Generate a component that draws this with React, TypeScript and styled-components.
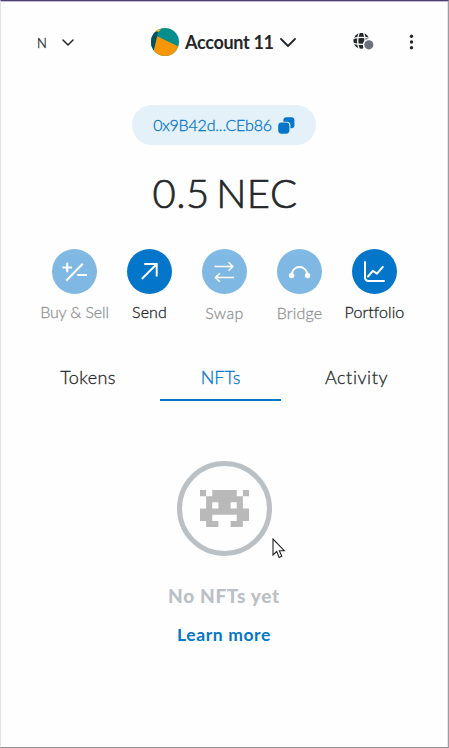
import React from "react";
import styled, { createGlobalStyle } from "styled-components";

const blue = "#0376c9";
const ink = "#24272a";

const GlobalStyle = createGlobalStyle`
  *, *::before, *::after { box-sizing: border-box; }
  body { margin: 0; background: #fefefe; font-family: Lato, "Liberation Sans", sans-serif; font-variant-ligatures: none; color: ${ink}; }
  button { font: inherit; color: inherit; background: none; border: 0; padding: 0; margin: 0; font-variant-ligatures: none; }
  svg { display: block; flex: none; }
`;

const Popup = styled.main`
  position: relative;
  width: 449px;
  height: 748px;
  overflow: hidden;
  background: #fefefe;
  border-top: 1px solid #4b4070;
  border-left: 1px solid #e2e0ee;
  border-right: 1px solid #9d9ca2;
  border-bottom: 1px solid #929292;
  box-shadow: inset 0 1px 0 #c5bedb, inset -1px 0 0 #e6e4ed;
`;

const Label = styled.span<{ $size: number; $weight?: number; $spacing?: number }>`
  font-size: ${(p) => p.$size}px;
  font-weight: ${(p) => p.$weight ?? 400};
  letter-spacing: ${(p) => p.$spacing ?? 0}px;
  line-height: 24px;
  white-space: nowrap;
  -webkit-text-stroke: ${(p) => (p.$weight === 300 ? 0.3 : 0)}px currentColor;
`;

const Header = styled.header`
  display: grid;
  grid-template-columns: 114px 183px 1fr;
  align-items: center;
  height: 28px;
  margin-top: 27px;
  padding: 0 34px 0 36px;
`;

const NetworkPicker = styled.button`
  display: flex;
  align-items: center;
  gap: 15px;
  padding-top: 1px;
`;

const AccountPicker = styled.button`
  display: flex;
  align-items: center;
  gap: 6px;
`;

const HeaderTools = styled.div`
  display: flex;
  align-items: center;
  justify-content: space-between;
  padding-left: 19px;
`;

const AddressPill = styled.button`
  display: flex;
  align-items: center;
  justify-content: center;
  gap: 6px;
  width: 184px;
  height: 40px;
  margin: 49px 0 0 131px;
  border-radius: 20px;
  background: #e5f1f9;
  color: ${blue};
`;

const Balance = styled.h1`
  margin: 24px 0 0;
  height: 48px;
  padding-left: 1px;
  font-size: 40px;
  line-height: 48px;
  font-weight: 300;
  letter-spacing: 0.5px;
  word-spacing: -5px;
  text-align: center;
  -webkit-text-stroke: 0.7px ${ink};
`;

const Actions = styled.nav`
  display: grid;
  grid-template-columns: repeat(5, 75px);
  margin: 32px 0 0 36px;
`;

const Action = styled.button<{ $muted: boolean; $drop: boolean }>`
  display: flex;
  flex-direction: column;
  align-items: center;
  gap: ${(p) => (p.$drop ? 7 : 6)}px;
  opacity: ${(p) => (p.$muted ? 0.5 : 1)};
`;

const ActionDisc = styled.span`
  display: grid;
  place-items: center;
  width: 45px;
  height: 45px;
  border-radius: 50%;
  background: ${blue};
`;

const Tabs = styled.div`
  display: grid;
  grid-template-columns: 144px 121px 151px;
  height: 46px;
  margin: 30px 0 0 15px;
`;

const Tab = styled.button<{ $active?: boolean }>`
  display: flex;
  justify-content: center;
  padding-top: 10px;
  border-bottom: 2px solid ${(p) => (p.$active ? blue : "transparent")};
  color: ${(p) => (p.$active ? blue : ink)};
`;

const EmptyState = styled.section`
  display: flex;
  flex-direction: column;
  align-items: center;
  padding-right: 1px;
  margin-top: 60px;
`;

const InvaderRing = styled.div`
  display: grid;
  place-items: center;
  width: 95px;
  height: 95px;
  border: 5px solid #bbc0c5;
  border-radius: 50%;
`;

const EmptyTitle = styled(Label)`
  margin-top: 28px;
  color: #bbc0c5;
`;

const LearnMore = styled(Label).attrs({ as: "a" })`
  margin-top: 15px;
  color: ${blue};
`;

const Pointer = styled.svg`
  position: absolute;
  left: 271px;
  top: 537px;
`;

const Chevron = ({ width, height, stroke }: { width: number; height: number; stroke: number }) => (
  <svg width={width} height={height} viewBox={`0 0 ${width} ${height}`} fill="none" stroke={ink} strokeWidth={stroke} strokeLinecap="round" strokeLinejoin="round">
    <path d={`M1 1 L${width / 2} ${height - 1} L${width - 1} 1`} />
  </svg>
);

const Avatar = () => (
  <svg width="28" height="28" viewBox="0 0 28 28">
    <defs>
      <clipPath id="avatar-disc"><circle cx="14" cy="14" r="14" /></clipPath>
    </defs>
    <g clipPath="url(#avatar-disc)">
      <path fill="#018e8c" d="M0 0h28v28H0z" />
      <path fill="#fbb300" d="M4 0L10 1.5L6.5 5L3 4z" />
      <path fill="#03505f" d="M0 4L7.2 3.4L6 9L3 22.5L0 24z" />
      <path fill="#f59602" d="M6.2 8.2L29 19.2V28H0L3 22z" />
    </g>
  </svg>
);

const Globe = () => (
  <svg width="22" height="18" viewBox="0 0 22 18">
    <circle cx="8.4" cy="7.8" r="8" fill={ink} />
    <g fill="none" stroke="#fefefe" strokeWidth="1.3">
      <path d="M6.2 -.5Q3.2 7.8 6.2 16.5M10.6 -.5Q13.6 7.8 10.6 16.5" />
      <path d="M0 5.4Q8.4 3.4 17 5.4M0 10.4Q8.4 12.4 17 10.4" />
    </g>
    <circle cx="15.8" cy="11.8" r="6" fill="#fefefe" />
    <circle cx="15.8" cy="11.8" r="4.6" fill="#6a737d" />
  </svg>
);

const Dots = () => (
  <svg width="5" height="16" viewBox="0 0 5 16" fill={ink}>
    <circle cx="2.5" cy="2.3" r="1.7" />
    <circle cx="2.5" cy="8" r="1.7" />
    <circle cx="2.5" cy="13.7" r="1.7" />
  </svg>
);

const CopyIcon = () => (
  <svg width="17" height="17" viewBox="0 0 17 17" fill={blue}>
    <rect x="5.4" y="0.3" width="11" height="11" rx="3" />
    <rect x="0" y="4.7" width="12.4" height="12.4" rx="3.5" fill="#e5f1f9" />
    <rect x="0.2" y="5.5" width="11.2" height="11.2" rx="3.4" />
  </svg>
);

const glyphs: Record<string, React.ReactNode> = {
  "Buy & Sell": <path d="M15 14v9.5M10.2 18.7h9.6M14 32L30.5 15M25 26.4h9.8" transform="translate(.2 -.3)" />,
  Send: <path d="M14.8 30L29.5 15.3M17.2 15h12.5v12.4" />,
  Swap: <path strokeWidth="1.6" d="M12.5 17.5h18M26.5 13.2l4.3 4.3-4.3 4.3M32 28.5H13.5M17.8 24.2l-4.3 4.3 4.3 4.3" />,
  Bridge: (
    <>
      <path strokeWidth="1.9" d="M14.5 26.5C15 21 18.5 18 22.5 18S30 21 30.5 26.5" />
      <circle cx="14.6" cy="26.5" r="2.7" fill="#fff" stroke="none" />
      <circle cx="30.6" cy="26.5" r="2.7" fill="#fff" stroke="none" />
    </>
  ),
  Portfolio: <path strokeLinecap="round" strokeLinejoin="round" d="M13 13v15.3Q13 32 16.7 32H32M16 27.5l4.8-5.6 4.2 2.8 5.8-6.8" />,
};

const actions = [
  { name: "Buy & Sell", muted: true, drop: false, spacing: -0.15 },
  { name: "Send", muted: false, drop: false, spacing: 0.1 },
  { name: "Swap", muted: true, drop: true, spacing: 0.4 },
  { name: "Bridge", muted: true, drop: true, spacing: 0.2 },
  { name: "Portfolio", muted: false, drop: false, spacing: 0.1 },
];

const Invader = () => (
  <svg width="49" height="38" viewBox="0 0 8 6.15" preserveAspectRatio="none" fill="#b9b9b9">
    <path fillRule="evenodd" d="M0 0h1v1H0zM2 0h4v1h1v2h1v2H7v1H5V5h1V4H2v1h1v1H1V5H0V3h1V1h1zM7 0h1v1H7zM2 2v1h1V2zM5 2v1h1V2z" />
  </svg>
);

export default function App() {
  return (
    <>
      <GlobalStyle />
      <Popup>
        <Header>
          <NetworkPicker>
            <Label $size={13} $weight={300}>N</Label>
            <Chevron width={12} height={7} stroke={1.5} />
          </NetworkPicker>
          <AccountPicker>
            <Avatar />
            <Label $size={18} $weight={700} $spacing={-0.3}>Account 11</Label>
            <Chevron width={16} height={9} stroke={1.8} />
          </AccountPicker>
          <HeaderTools>
            <Globe />
            <Dots />
          </HeaderTools>
        </Header>
        <AddressPill>
          <Label $size={16} $weight={300} $spacing={-0.2}>0x9B42d...CEb86</Label>
          <CopyIcon />
        </AddressPill>
        <Balance>0.5 NEC</Balance>
        <Actions>
          {actions.map((a) => (
            <Action key={a.name} $muted={a.muted} $drop={a.drop}>
              <ActionDisc>
                <svg width="45" height="45" viewBox="0 0 45 45" fill="none" stroke="#fff" strokeWidth="2">
                  {glyphs[a.name]}
                </svg>
              </ActionDisc>
              <Label $size={16} $weight={300} $spacing={a.spacing}>{a.name}</Label>
            </Action>
          ))}
        </Actions>
        <Tabs>
          <Tab><Label $size={18} $weight={300} $spacing={0.4}>Tokens</Label></Tab>
          <Tab $active><Label $size={18} $weight={300}>NFTs</Label></Tab>
          <Tab><Label $size={18} $weight={300} $spacing={0.6}>Activity</Label></Tab>
        </Tabs>
        <EmptyState>
          <InvaderRing><Invader /></InvaderRing>
          <EmptyTitle $size={19} $weight={900} $spacing={0.7}>No NFTs yet</EmptyTitle>
          <LearnMore $size={17.5} $weight={700} $spacing={0.6}>Learn more</LearnMore>
        </EmptyState>
        <Pointer width="14" height="21" viewBox="0 0 14 21">
          <path d="M1 1V17L4.7 13.5L7.2 19.5L9.8 18.3L7.3 12.7H12.3Z" fill="#fff" stroke="#222" strokeWidth="1.1" />
        </Pointer>
      </Popup>
    </>
  );
}
